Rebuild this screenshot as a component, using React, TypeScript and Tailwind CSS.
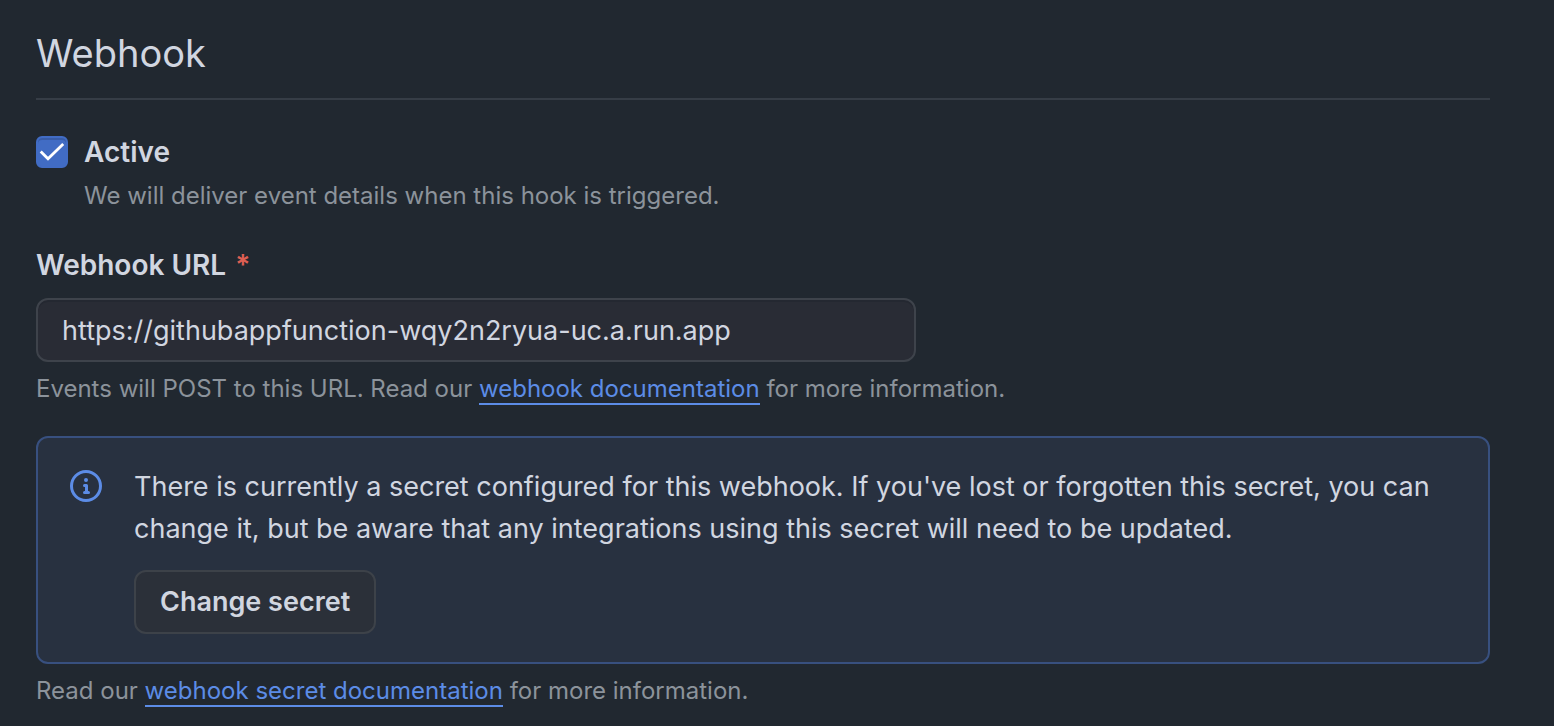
import { useState } from "react";
import type { ReactNode } from "react";

function DocLink({ href, children }: { href: string; children: ReactNode }) {
  return (
    <a href={href} className="border-b-2 border-[#5c8ce6] text-[#5c8ce6]">
      {children}
    </a>
  );
}

function InfoIcon() {
  return (
    <svg viewBox="0 0 16 16" aria-hidden="true" className="size-8 shrink-0 fill-[#5c8ce6]">
      <path d="M0 8a8 8 0 1 1 16 0A8 8 0 0 1 0 8Zm8-6.5a6.5 6.5 0 1 0 0 13 6.5 6.5 0 0 0 0-13ZM6.5 7.75A.75.75 0 0 1 7.25 7h1a.75.75 0 0 1 .75.75v2.75h.25a.75.75 0 0 1 0 1.5h-2a.75.75 0 0 1 0-1.5h.25v-2h-.25a.75.75 0 0 1-.75-.75ZM8 6a1 1 0 1 1 0-2 1 1 0 0 1 0 2Z" />
    </svg>
  );
}

export default function App() {
  const [active, setActive] = useState(true);
  const [url, setUrl] = useState("https://githubappfunction-wqy2n2ryua-uc.a.run.app");

  return (
    <main className="min-h-screen bg-[#212830] pt-6 pr-16 pb-4 pl-9 font-['Inter',sans-serif] text-[27px] leading-[42px] text-[#d1d6e0]">
      <h1 className="border-b-2 border-[#363d46] pb-4 text-[38px] leading-[58px]">Webhook</h1>

      <div className="mt-9 flex gap-4">
        <span className="grid size-8 shrink-0">
          <input
            id="active"
            type="checkbox"
            checked={active}
            onChange={(e) => setActive(e.target.checked)}
            aria-describedby="active-note"
            className="peer col-start-1 row-start-1 size-8 appearance-none rounded-md border-2 border-[#656c76] shadow-[inset_0_2px_0_rgba(20,30,60,0.2)] checked:border-[#416cc4] checked:bg-[#416cc4]"
          />
          <svg
            viewBox="0 0 32 32"
            aria-hidden="true"
            className="pointer-events-none invisible col-start-1 row-start-1 size-8 fill-none stroke-white stroke-[2.8] peer-checked:visible"
          >
            <path d="M4.7 15.5 12 22.8 27.2 8" />
          </svg>
        </span>
        <div>
          <label htmlFor="active" className="block text-[28px] leading-8 font-semibold">
            Active
          </label>
          <p id="active-note" className="mt-2.5 text-[24px] leading-9 text-[#8c939b]">
            We will deliver event details when this hook is triggered.
          </p>
        </div>
      </div>

      <div className="mt-[30px]">
        <label htmlFor="url" className="block text-[28px] font-semibold">
          Webhook URL <span className="ml-0.5 text-[#dd5f53]">*</span>
        </label>
        <input
          id="url"
          type="url"
          required
          value={url}
          onChange={(e) => setUrl(e.target.value)}
          aria-describedby="url-note"
          className="mt-3 block h-16 w-full max-w-[880px] rounded-xl border-2 border-[#3e434b] bg-[#292c35] px-6 shadow-[inset_0_2px_0_rgba(20,25,35,0.2)]"
        />
        <p id="url-note" className="mt-[9px] text-[24px] leading-9 text-[#8c939b]">
          Events will POST to this URL. Read our <DocLink href="#webhooks">webhook documentation</DocLink> for more
          information.
        </p>
      </div>

      <section className="mt-[29px] flex gap-8 rounded-xl border-2 border-[#38507f] bg-[#283140] px-8 py-7">
        <span className="flex pt-1">
          <InfoIcon />
        </span>
        <div>
          <p>
            There is currently a secret configured for this webhook. If you've lost or forgotten this secret, you can
            change it, but be aware that any integrations using this secret will need to be updated.
          </p>
          <button
            type="button"
            className="mt-5 h-16 rounded-xl border-2 border-[#3d4249] bg-[#2b3039] px-6 font-semibold"
          >
            Change secret
          </button>
        </div>
      </section>
      <p className="mt-[9px] text-[24px] leading-9 text-[#8c939b]">
        Read our <DocLink href="#secrets">webhook secret documentation</DocLink> for more information.
      </p>
    </main>
  );
}
